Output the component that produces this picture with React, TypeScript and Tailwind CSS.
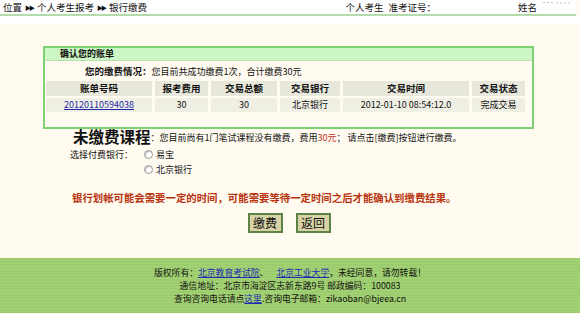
const cjk = { fontFamily: '"Noto Sans CJK SC", "Noto Sans", sans-serif' };

const heads = [
  { label: "账单号码", w: "w-[106px]" },
  { label: "报考费用", w: "w-[53px]" },
  { label: "交易总额", w: "w-[66px]" },
  { label: "交易银行", w: "w-[60px]" },
  { label: "交易时间", w: "w-[126px]" },
  { label: "交易状态", w: "w-[53px]" },
];

const row = ["30", "30", "北京银行", "2012-01-10 08:54:12.0", "完成交易"];

const Radio = ({ label }: { label: string }) => (
  <label className="flex items-center gap-[3px] h-[15px]">
    <span className="w-[9px] h-[9px] rounded-full border border-[#9a9a9a] bg-white shadow-[inset_1px_1px_1px_#bdbdbd]" />
    <span>{label}</span>
  </label>
);

export default function App() {
  return (
    <div style={cjk} className="w-[580px] h-[315px] overflow-hidden bg-[#fffbf0] text-[9px] text-[#111] flex flex-col">
      {/* top nav */}
      <div className="h-[16px] bg-white flex items-center border-b-2 border-[#b3dcab] mr-[4px]">
        <div className="pl-[3px] flex items-center gap-[1px] text-[9.5px]">
          <span>位置</span>
          <span className="text-[6px] tracking-[-2px] ml-[2px] mr-[3px]">▶▶</span>
          <span>个人考生报考</span>
          <span className="text-[6px] tracking-[-2px] ml-[2px] mr-[3px]">▶▶</span>
          <span>银行缴费</span>
        </div>
        <div className="ml-auto flex items-center h-full text-[9.5px]">
          <span>个人考生</span>
          <span className="ml-[5px]">准考证号：</span>
          <span className="w-[74px] h-full bg-white" />
          <span className="ml-[8px]">姓名</span>
          <span className="ml-[3px] w-[36px] h-full bg-white text-[4px] text-[#999] leading-[6px] pl-[2px]">▪▪▪ ▫▫▫▫</span>
        </div>
      </div>

      <div className="h-[8px] bg-white" />

      {/* bill box */}
      <div className="mt-[22px] ml-[43px] w-[491px] border-2 border-[#80cf73] bg-[#fffbf0]">
        <div className="h-[13px] bg-[#ccf6c4] border-b border-[#b8e0b0] flex items-center pl-[15px] font-bold">
          确认您的账单
        </div>
        <div className="h-[18px] flex items-end pl-[40px] pb-[1px]">
          <span className="font-bold text-[9.5px]">您的缴费情况：</span>
          <span>您目前共成功缴费1次，合计缴费30元</span>
        </div>
        <table className="border-separate border-spacing-x-[3px] border-spacing-y-[2px] ml-[-2px]">
          <thead>
            <tr>
              {heads.map((h) => (
                <th key={h.label} className={`${h.w} h-[15px] p-0 bg-[#e7e7db] font-bold text-[9.5px] text-center`}>
                  {h.label}
                </th>
              ))}
            </tr>
          </thead>
          <tbody>
            <tr>
              <td className="h-[14px] p-0 bg-[#f0efe4] text-center">
                <a href="#" className="text-[#1f2aa8] underline">20120110594038</a>
              </td>
              {row.map((c, i) => (
                <td key={i} className="h-[14px] p-0 bg-[#f0efe4] text-center">
                  {c}
                </td>
              ))}
            </tr>
          </tbody>
        </table>
        <div className="h-[13px]" />
      </div>

      {/* unpaid */}
      <div className="pl-[73px] flex items-end h-[16px]">
        <span className="text-[15.5px] font-bold leading-[17px]">未缴费课程</span>
        <span className="leading-[12px] pb-[1px]">
          ：您目前尚有1门笔试课程没有缴费，费用<span className="text-[#c0301c]">30元</span>； 请点击[缴费]按钮进行缴费。
        </span>
      </div>

      <div className="pl-[70px] mt-[2px] flex">
        <span className="w-[74px] leading-[15px]">选择付费银行：</span>
        <div className="flex flex-col">
          <Radio label="易宝" />
          <Radio label="北京银行" />
        </div>
      </div>

      <div className="pl-[72px] mt-[14px] text-[10.4px] font-bold text-[#b8340f] leading-[14px]">
        银行划帐可能会需要一定的时间，可能需要等待一定时间之后才能确认到缴费结果。
      </div>

      <div className="mt-[8px] flex justify-center gap-[13px] ml-[-2px]">
        <button className="w-[35px] h-[20px] bg-[#d7d3a6] border-2 border-[#5d8445] text-[12px] leading-[14px]">缴费</button>
        <button className="w-[35px] h-[20px] bg-[#d7d3a6] border-2 border-[#5d8445] text-[12px] leading-[14px]">返回</button>
      </div>

      {/* footer */}
      <div className="mt-[25px] h-[55px] bg-[#9dcc6e] bg-[repeating-linear-gradient(180deg,#9dcc6e_0px,#9dcc6e_2px,#a4d276_2px,#a4d276_3px)] flex flex-col items-center justify-center text-[8.8px] leading-[13px]">
        <div>
          版权所有：<a href="#" className="text-[#1c2bb0] underline">北京教育考试院</a>、
          <a href="#" className="ml-[8px] text-[#1c2bb0] underline">北京工业大学</a>，未经同意，请勿转载！
        </div>
        <div>通信地址：北京市海淀区志新东路9号 邮政编码：100083</div>
        <div>
          查询咨询电话请点<a href="#" className="text-[#1c2bb0] underline">这里</a>.咨询电子邮箱：zikaoban@bjeea.cn
        </div>
      </div>
    </div>
  );
}
